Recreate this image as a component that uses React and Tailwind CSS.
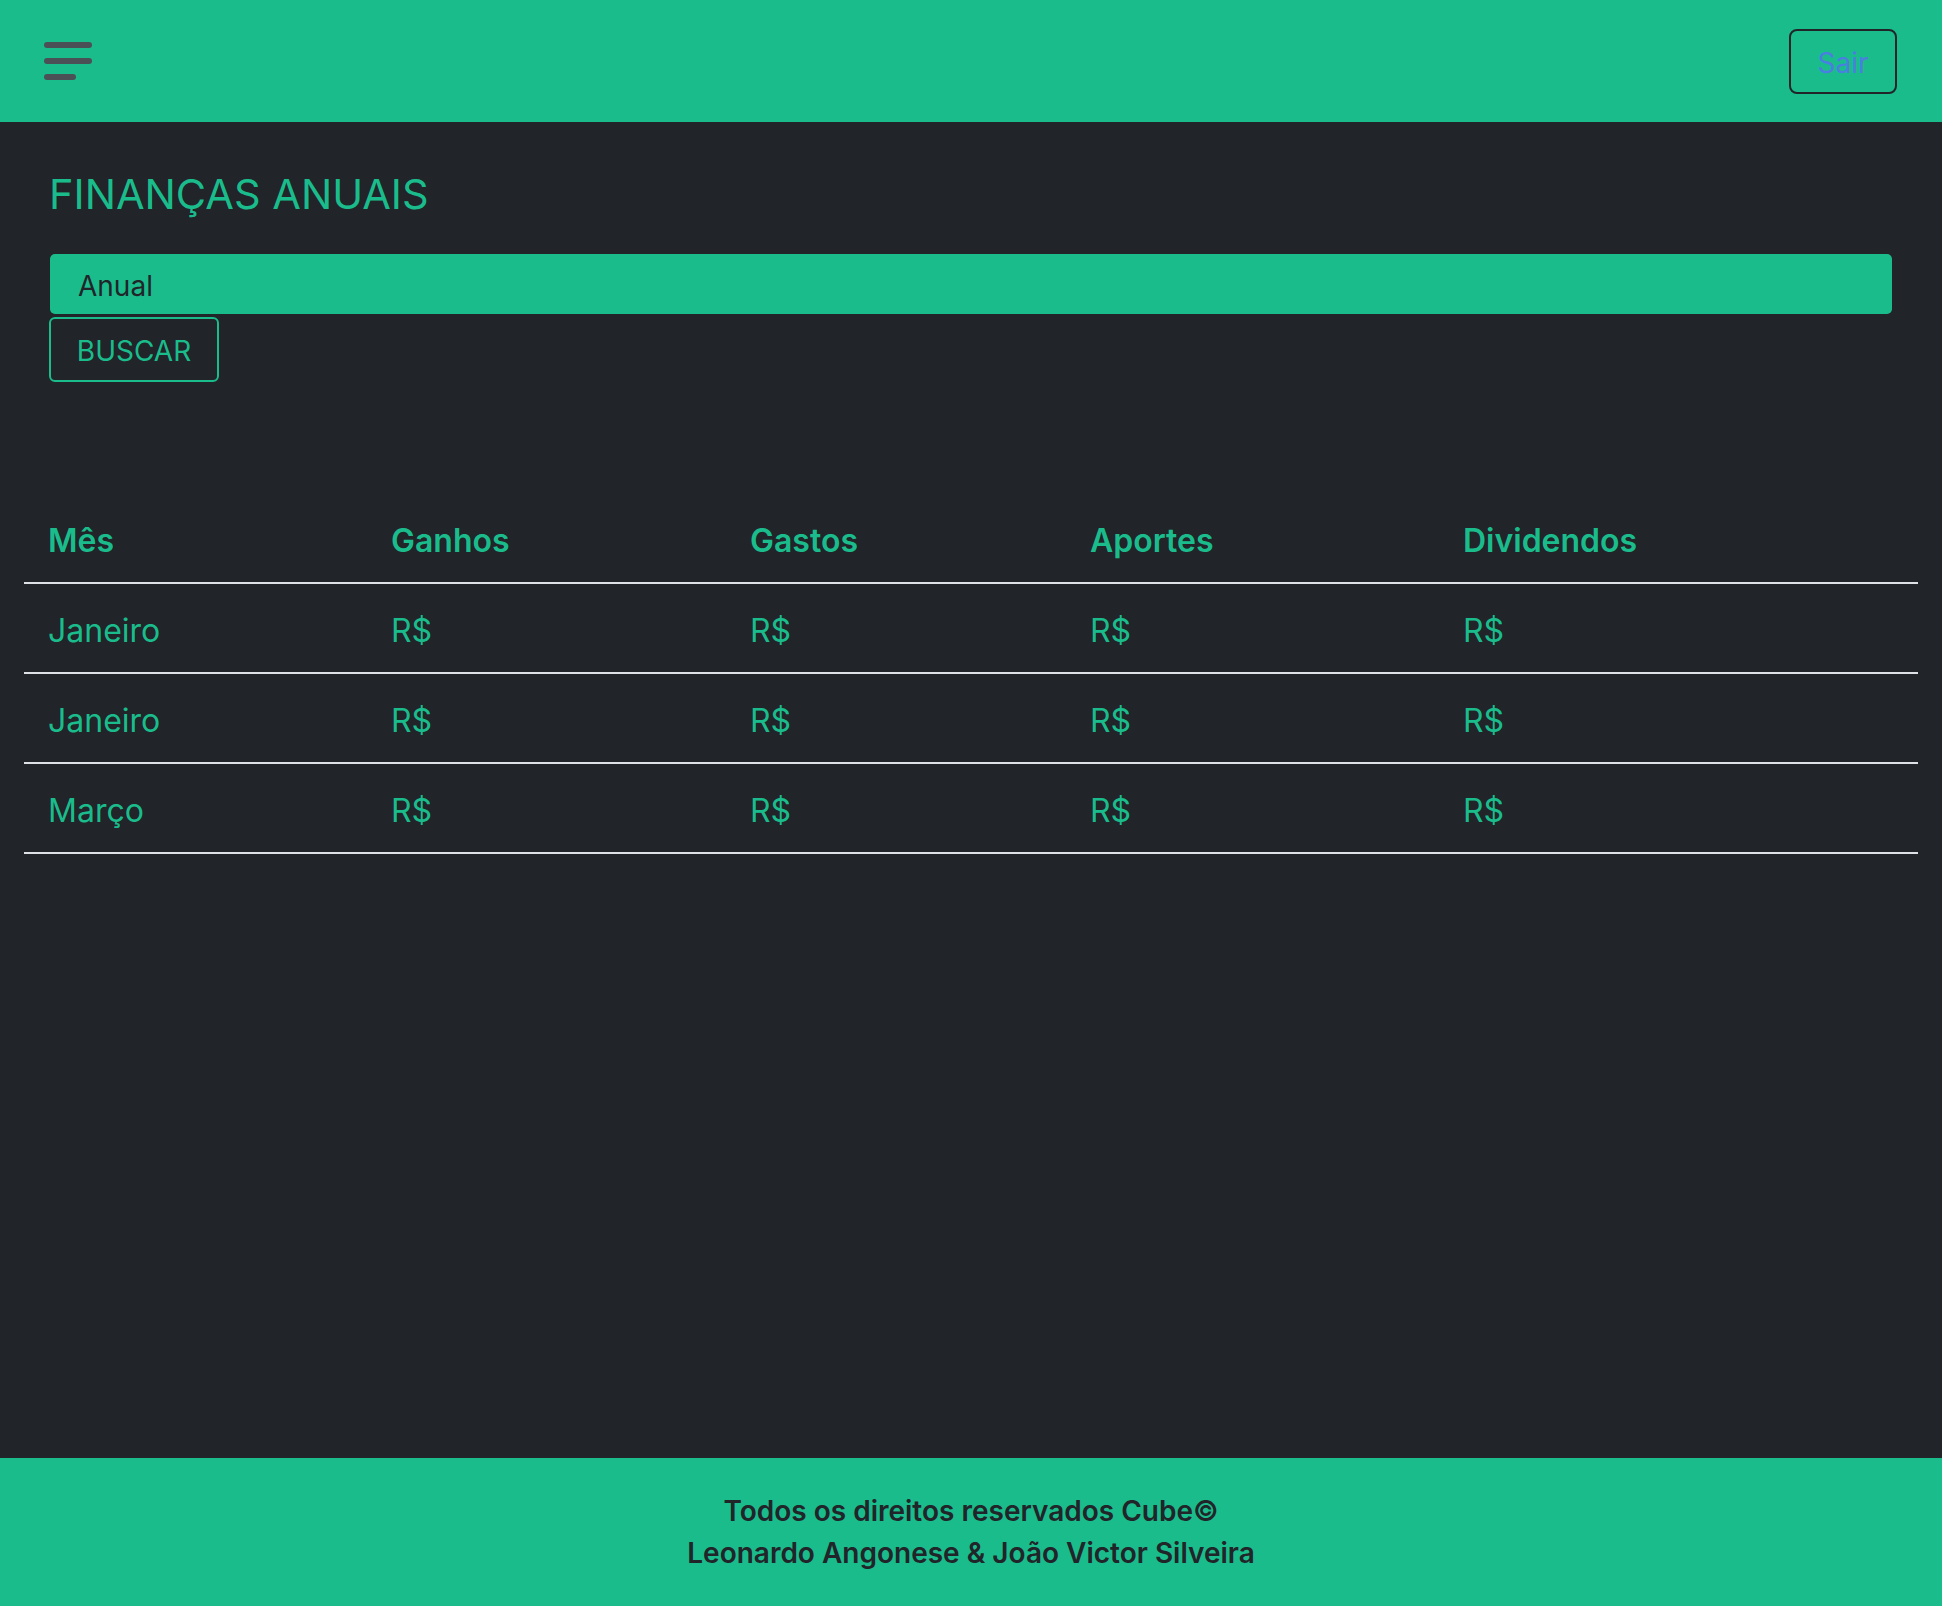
const rows = [
  { mes: 'Janeiro' },
  { mes: 'Janeiro' },
  { mes: 'Março' },
]

const cols = [
  { label: 'Mês', w: 'w-[343px]' },
  { label: 'Ganhos', w: 'w-[359px]' },
  { label: 'Gastos', w: 'w-[340px]' },
  { label: 'Aportes', w: 'w-[373px]' },
  { label: 'Dividendos', w: '' },
]

export default function App() {
  return (
    <div
      className="min-h-screen flex flex-col bg-[#212429] text-[#1bbc8c]"
      style={{ fontFamily: 'Inter, "Noto Sans", sans-serif' }}
    >
      <header className="h-[122px] bg-[#1bbc8c] flex items-center justify-between pl-[44px] pr-[45px] shrink-0">
        <button className="flex flex-col gap-[10px] w-[48px]">
          <span className="block h-[6px] w-[48px] rounded-full bg-[#4b5057]" />
          <span className="block h-[6px] w-[48px] rounded-full bg-[#4b5057]" />
          <span className="block h-[6px] w-[32px] rounded-full bg-[#4b5057]" />
        </button>
        <button className="w-[108px] h-[65px] pt-[3px] border-2 border-[#212529] rounded-[8px] text-[28px] text-[#4a7ee0]">
          Sair
        </button>
      </header>

      <main className="flex-1 px-[24px] pt-[48px]">
        <div className="px-[26px]">
          <h1 className="text-[41.5px] leading-[1.2] font-normal -ml-[1px]">FINANÇAS ANUAIS</h1>
          <div className="mt-[34px] h-[60px] rounded-[5px] bg-[#1bbc8c] flex items-center px-[28px] pt-[5px] text-[28px] text-[#212529]">
            Anual
          </div>
          <button className="mt-[3px] -ml-[1px] w-[170px] h-[65px] pt-[4px] border-2 border-[#1bbc8c] rounded-[6px] text-[28px] text-[#1bbc8c]">
            BUSCAR
          </button>
        </div>

        <table className="mt-[112px] w-full table-fixed border-collapse">
          <thead>
            <tr className="border-b-2 border-[#dee2e6]">
              {cols.map((c) => (
                <th
                  key={c.label}
                  className={`${c.w} text-left font-semibold text-[32px] leading-[1.5] px-[24px] pt-[23px] pb-[17px]`}
                >
                  {c.label}
                </th>
              ))}
            </tr>
          </thead>
          <tbody>
            {rows.map((r, i) => (
              <tr key={i} className="border-b-2 border-[#dee2e6]">
                <td className="text-[32px] leading-[1.5] px-[24px] pt-[23px] pb-[17px]">{r.mes}</td>
                <td className="text-[32px] leading-[1.5] px-[24px] pt-[23px] pb-[17px]">R$</td>
                <td className="text-[32px] leading-[1.5] px-[24px] pt-[23px] pb-[17px]">R$</td>
                <td className="text-[32px] leading-[1.5] px-[24px] pt-[23px] pb-[17px]">R$</td>
                <td className="text-[32px] leading-[1.5] px-[24px] pt-[23px] pb-[17px]">R$</td>
              </tr>
            ))}
          </tbody>
        </table>
      </main>

      <footer className="h-[148px] shrink-0 bg-[#1bbc8c] flex flex-col items-center justify-center text-[28px] leading-[42px] font-semibold text-[#212529]">
        <p>Todos os direitos reservados Cube©</p>
        <p>Leonardo Angonese &amp; João Victor Silveira</p>
      </footer>
    </div>
  )
}
